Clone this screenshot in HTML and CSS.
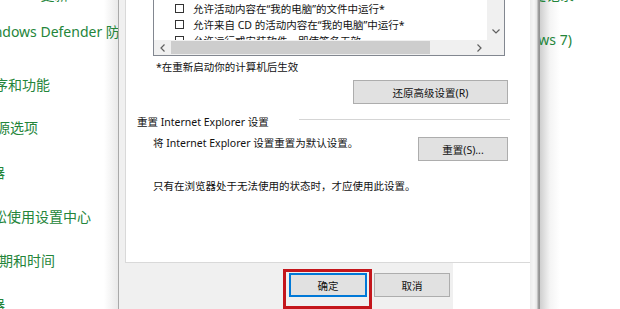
FILE: index.html
```html
<!DOCTYPE html>
<html lang="zh-CN">
<head>
  <meta charset="UTF-8">
  <title>Internet 选项</title>
  <link rel="stylesheet" href="styles.css">
</head>
<body>
  <div class="screen">
    <!-- control panel behind the dialog -->
    <aside class="cpl cpl-left">
      <ul class="links">
        <li class="i1">Windows 更新</li>
        <li class="i2">Windows Defender 防火墙</li>
        <li class="i3">程序和功能</li>
        <li class="i4">电源选项</li>
        <li class="i5">凭据管理器</li>
        <li class="i6">轻松使用设置中心</li>
        <li class="i7">日期和时间</li>
        <li class="i8">设备管理器</li>
      </ul>
    </aside>

    <main class="dialog">
      <section class="tab-page">
        <div class="listbox">
          <div class="list">
            <div class="opt"><span class="check"></span>允许活动内容在“我的电脑”的文件中运行*</div>
            <div class="opt"><span class="check"></span>允许来自 CD 的活动内容在“我的电脑”中运行*</div>
            <div class="opt"><span class="check"></span>允许运行或安装软件，即使签名无效</div>
          </div>
          <div class="vscroll">
            <svg width="8" height="5" viewBox="0 0 8 5"><polyline points="0.5,0.5 4,4 7.5,0.5" /></svg>
          </div>
          <div class="hscroll">
            <span class="arrow"><svg width="5" height="8" viewBox="0 0 5 8"><polyline points="4.5,0.5 1,4 4.5,7.5" /></svg></span>
            <span class="thumb"></span>
            <span class="arrow arrow-right"><svg width="5" height="8" viewBox="0 0 5 8"><polyline points="0.5,0.5 4,4 0.5,7.5" /></svg></span>
          </div>
          <div class="corner"></div>
        </div>

        <p class="note">*在重新启动你的计算机后生效</p>

        <div class="btn-row">
          <button class="btn btn-restore">还原高级设置(R)</button>
        </div>

        <div class="group-title">
          <span>重置 Internet Explorer 设置</span>
          <span class="rule"></span>
        </div>

        <div class="reset-row">
          <p>将 Internet Explorer 设置重置为默认设置。</p>
          <button class="btn btn-reset">重置(S)...</button>
        </div>

        <p class="hint">只有在浏览器处于无法使用的状态时，才应使用此设置。</p>
      </section>

      <footer class="dialog-foot">
        <div class="foot-bar">
          <div class="highlight">
            <button class="btn btn-ok">确定</button>
          </div>
          <button class="btn btn-cancel">取消</button>
        </div>
        <div class="foot-blank"></div>
      </footer>
    </main>

    <div class="dialog-edge"></div>

    <aside class="cpl cpl-right">
      <ul class="links">
        <li class="r1">文件历史记录</li>
        <li class="r2">备份和还原(Windows 7)</li>
      </ul>
    </aside>
  </div>
</body>
</html>
```

FILE: styles.css
```css
* {
  box-sizing: border-box;
}

body {
  margin: 0;
  font-family: "Noto Sans", "Noto Sans CJK SC", sans-serif;
  background: #fff;
}

.screen {
  display: flex;
  width: 620px;
  height: 309px;
  overflow: hidden;
}

/* Control panel windows */
.cpl {
  overflow: hidden;
  font-size: 14px;
  color: #24853a;
}

.cpl-left {
  width: 118px;
  flex: none;
  background: linear-gradient(to right, #fff 104px, #e9e9e9 118px);
}

.cpl-right {
  flex: 1;
  background: linear-gradient(to right, #cfcfcf, #f4f4f4 10px, #fff 20px);
}

.links {
  list-style: none;
  margin: -14px 0 0;
  padding: 0;
  display: flex;
  flex-direction: column;
  gap: 24px;
}

.links li {
  height: 20px;
  line-height: 20px;
  white-space: nowrap;
}

.i1 { margin-left: -23px; margin-top: -1px; }
.i2 { margin-left: -23px; margin-top: -7px; }
.i3 { margin-left: -20px; margin-top: 9px; }
.i4 { margin-left: -18px; margin-top: -1px; }
.i5 { margin-left: -65px; margin-top: 1px; }
.i6 { margin-left: -21px; }
.i7 { margin-left: -15px; }
.i8 { margin-left: -65px; }

.r1 { margin-left: -50px; margin-top: -1px; }
.r2 { margin-left: -118px; margin-top: 1px; }

/* Internet options dialog */
.dialog {
  width: 412px;
  flex: none;
  display: flex;
  flex-direction: column;
  border-left: 1px solid #a9a9a9;
  background: #f0f0f0;
  font-size: 10.5px;
  color: #111;
}

.dialog-edge {
  width: 10px;
  flex: none;
  background: linear-gradient(to right, #ececec 0, #f6f6f6 4px, #e4e4e4 7px, #a4a4a4 8px, #8e8e8e 10px);
}

.tab-page {
  height: 270px;
  margin-left: 6px;
  padding: 0 22px 0 11px;
  background: #fff;
  border-left: 1px solid #d9d9d9;
  border-bottom: 1px solid #d9d9d9;
}

.tab-page p {
  margin: 0;
  line-height: 14px;
  white-space: nowrap;
}

/* checkbox tree */
.listbox {
  width: 352px;
  height: 72px;
  margin: -16px 0 0 16px;
  border: 1px solid #828790;
  display: grid;
  grid-template-columns: 1fr 17px;
  grid-template-rows: 55px 15px;
  background: #fff;
}

.list {
  padding: 15px 0 0 21px;
  overflow: hidden;
}

.opt {
  display: flex;
  align-items: center;
  gap: 9px;
  height: 16px;
  white-space: nowrap;
}

.check {
  width: 9px;
  height: 9px;
  flex: none;
  border: 1px solid #333;
  background: #fff;
}

.vscroll {
  background: #f0f0f0;
  display: flex;
  align-items: flex-end;
  justify-content: center;
  padding-bottom: 6px;
}

.hscroll {
  background: #f0f0f0;
  display: flex;
  align-items: center;
}

.corner {
  background: #f0f0f0;
}

.vscroll svg polyline,
.hscroll svg polyline {
  fill: none;
  stroke: #606060;
  stroke-width: 1.2;
}

.arrow {
  width: 16px;
  flex: none;
  display: flex;
  justify-content: center;
}

.arrow-right {
  margin-left: auto;
}

.thumb {
  width: 259px;
  height: 13px;
  margin-left: 1px;
  background: #cdcdcd;
}

.note {
  margin: 4px 0 0 19px !important;
}

.btn {
  font-family: inherit;
  font-size: 10.5px;
  color: #111;
  height: 24px;
  padding: 0;
  background: #e1e1e1;
  border: 1px solid #adadad;
}

.btn-row {
  display: flex;
  justify-content: flex-end;
  margin-top: 6px;
}

.btn-restore {
  width: 155px;
}

.group-title {
  display: flex;
  height: 14px;
  line-height: 14px;
  margin-top: 11px;
  white-space: nowrap;
}

.group-title .rule {
  flex: 1;
  height: 0;
  margin: 4px -2px 0 30px;
  border-top: 1px solid #d5d5d5;
}

.reset-row {
  display: flex;
  align-items: flex-start;
  margin-top: 7px;
}

.reset-row p {
  margin-left: 16px;
}

.btn-reset {
  width: 90px;
  margin: 1px 0 0 auto;
}

.hint {
  margin: 18px 0 0 16px !important;
}

/* bottom button strip */
.dialog-foot {
  flex: 1;
  display: flex;
}

.foot-bar {
  width: 334px;
  display: flex;
  justify-content: flex-end;
  align-items: flex-start;
  gap: 2px;
  padding: 6px 3px 0 0;
}

.foot-blank {
  flex: 1;
  background: #fff;
}

.highlight {
  height: 40px;
  padding: 1px 2px 0 3px;
  border: 3px solid #c4161c;
}

.btn-ok {
  width: 78px;
  border: 2px solid #0078d7;
}

.btn-cancel {
  width: 76px;
  margin-top: 4px;
}
```
